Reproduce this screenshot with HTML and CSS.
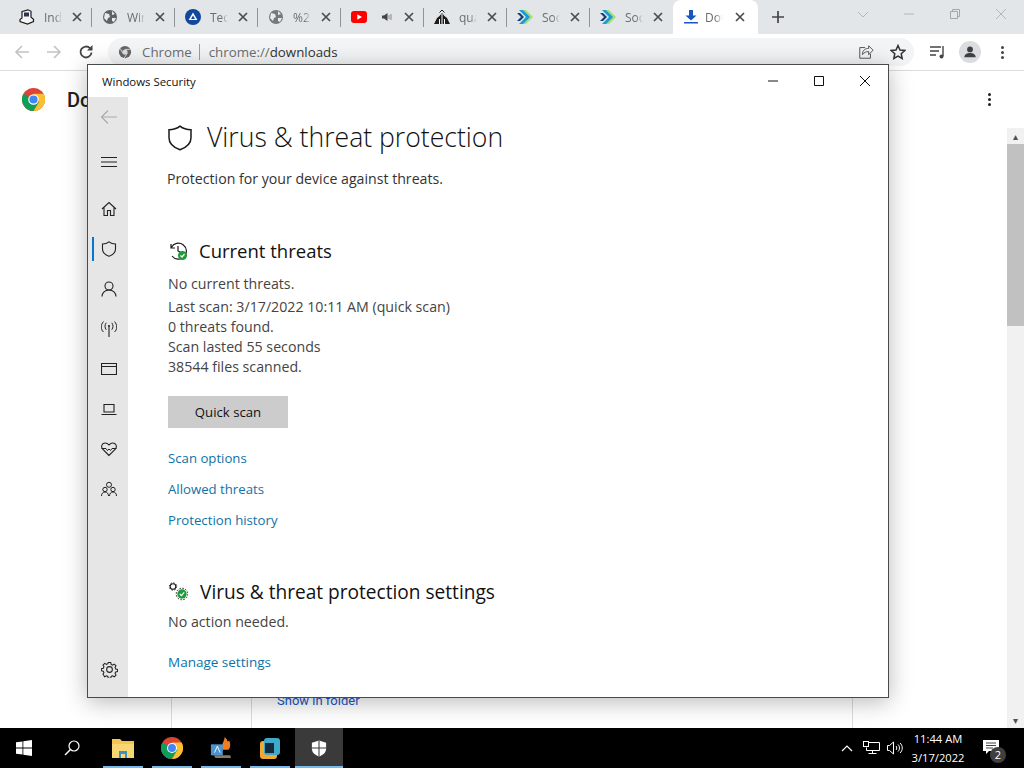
FILE: index.html
```html
<!DOCTYPE html>
<html lang="en">
<head>
<meta charset="utf-8">
<title>Windows Security</title>
<link rel="stylesheet" href="styles.css">
</head>
<body>
<svg class="defs" aria-hidden="true"><defs><g id="tabx"><path d="M1 1l8 8M9 1L1 9" stroke="#4a4d50" stroke-width="1.700"/></g></defs></svg>
<div class="screen">
  <header class="tabstrip">
    <div class="tab"><svg class="favicon" viewBox="0 0 16 16"><path d="M3 2.500L9 .8l3 1.500v6l2.500 2v2.200L8.500 15 1 12.500v-2l2-1.500z" fill="#f4f4f4" stroke="#1c1c1c" stroke-width="1.200"/><rect x="5" y="3.500" width="5" height="4" fill="#2d3350"/></svg><span class="tab-title">Indi</span><svg class="tab-x" viewBox="0 0 10 10"><use href="#tabx"/></svg></div>
    <div class="tab"><svg class="favicon" viewBox="0 0 16 16"><circle cx="8" cy="8" r="7" fill="#5f6368"/><path d="M3 4l4 1 1 3-2 1-1 3-3-3zM10 2l3 3-3 1zM10 9h4l-2 4-2-1z" fill="#e8eaed"/></svg><span class="tab-title">Win</span><svg class="tab-x" viewBox="0 0 10 10"><use href="#tabx"/></svg></div>
    <div class="tab"><svg class="favicon" viewBox="0 0 16 16"><circle cx="8" cy="8" r="8" fill="#12479c"/><path d="M8 3.600L12.400 11H3.600z" fill="#fff"/><path d="M8 6.600L10 10H6z" fill="#12479c"/></svg><span class="tab-title">Tech</span><svg class="tab-x" viewBox="0 0 10 10"><use href="#tabx"/></svg></div>
    <div class="tab"><svg class="favicon" viewBox="0 0 16 16"><circle cx="8" cy="8" r="7" fill="#75787c"/><path d="M3 4l4 1 1 3-2 1-1 3-3-3zM10 2l3 3-3 1zM10 9h4l-2 4-2-1z" fill="#e8eaed"/></svg><span class="tab-title">%2.</span><svg class="tab-x" viewBox="0 0 10 10"><use href="#tabx"/></svg></div>
    <div class="tab"><svg class="favicon yt" viewBox="0 0 16 12"><rect width="16" height="12" rx="3" fill="#f00"/><path d="M6.300 3.200L11 6l-4.700 2.800z" fill="#fff"/></svg><svg class="audio" viewBox="0 0 12 12"><path d="M1 4.500h2L6.500 2v8L3 7.500H1z" fill="#444"/><path d="M8 4v4M10 3v6" stroke="#888"/></svg><svg class="tab-x" viewBox="0 0 10 10"><use href="#tabx"/></svg></div>
    <div class="tab"><svg class="favicon" viewBox="0 0 16 16"><path d="M0 15l3-6 2.500-2L8 4l2.500 3L13 9l3 6z" fill="#1c1c1c"/><path d="M8 5v10M5.500 10v5M10.500 10v5" stroke="#fff"/><path d="M5.500 3.500L8 1l2.500 2.500" stroke="#1c1c1c" fill="none"/></svg><span class="tab-title">qua</span><svg class="tab-x" viewBox="0 0 10 10"><use href="#tabx"/></svg></div>
    <div class="tab"><svg class="favicon" viewBox="0 0 16 16"><path d="M5 1l7 7-7 7h4l7-7-7-7z" fill="#a6dc7c"/><path d="M2 1l7 7-7 7h4l7-7-7-7z" fill="#1b9bd6"/><path d="M0 4l4 4-4 4h3l4-4-4-4z" fill="#123e78"/></svg><span class="tab-title">Soc</span><svg class="tab-x" viewBox="0 0 10 10"><use href="#tabx"/></svg></div>
    <div class="tab"><svg class="favicon" viewBox="0 0 16 16"><path d="M5 1l7 7-7 7h4l7-7-7-7z" fill="#a6dc7c"/><path d="M2 1l7 7-7 7h4l7-7-7-7z" fill="#1b9bd6"/><path d="M0 4l4 4-4 4h3l4-4-4-4z" fill="#123e78"/></svg><span class="tab-title">Soc</span><svg class="tab-x" viewBox="0 0 10 10"><use href="#tabx"/></svg></div>
    <div class="tab tab-active"><svg class="favicon dl" viewBox="0 0 14 14"><path d="M5 0h4v5.500h3.500L7 10.500 1.500 5.500H5z" fill="#1a55c4"/><rect x="0" y="12" width="14" height="1.500" fill="#1a55c4"/></svg><span class="tab-title">Dow</span><svg class="tab-x" viewBox="0 0 10 10"><use href="#tabx"/></svg></div>
    <svg class="newtab" viewBox="0 0 12 12"><path d="M6 0v12M0 6h12" stroke="#444" stroke-width="1.700"/></svg>
    <div class="win-controls">
      <svg viewBox="0 0 12 12"><path d="M1 4l5 5 5-5" fill="none" stroke="#b4b7ba"/></svg>
      <svg viewBox="0 0 12 12"><path d="M1 6h10" stroke="#b4b7ba"/></svg>
      <svg viewBox="0 0 12 12"><path d="M1.500 3.500h7v7h-7zM3.500 3.500v-2h7v7h-2" fill="none" stroke="#a4a7aa"/></svg>
      <svg viewBox="0 0 12 12"><path d="M1 1l10 10M11 1L1 11" stroke="#b4b7ba"/></svg>
    </div>
  </header>

  <nav class="toolbar">
    <svg class="nav-icon" viewBox="0 0 16 16"><path d="M15 8H2M8 2L2 8l6 6" fill="none" stroke="#c0c3c6" stroke-width="1.600"/></svg>
    <svg class="nav-icon" viewBox="0 0 16 16"><path d="M1 8h13M8 2l6 6-6 6" fill="none" stroke="#c0c3c6" stroke-width="1.600"/></svg>
    <svg class="nav-icon" viewBox="0 0 16 16"><path d="M13.500 8.500A5.500 5.500 0 1 1 12 4.200" fill="none" stroke="#444" stroke-width="1.800"/><path d="M14.500 1v5.500H9z" fill="#444"/></svg>
    <div class="omnibox">
      <svg class="omni-icon" viewBox="0 0 16 16"><circle cx="8" cy="8" r="7" fill="#666"/><circle cx="8" cy="8" r="3" fill="#ddd"/><path d="M8 5h6M5.500 9.500L2.500 4M10.500 9.500L7 15" stroke="#ddd"/></svg>
      <span class="omni-origin">Chrome</span>
      <span class="omni-url">chrome://<b>downloads</b></span>
      <svg class="omni-action" viewBox="0 0 18 18"><path d="M8 4H2v12h12v-5M5 12c0-5 3-7 7-7V2l5 5-5 5V8.500c-3 0-5 1-7 3.500z" fill="none" stroke="#555" stroke-width="1.100"/></svg>
      <svg class="omni-action" viewBox="0 0 16 16"><path d="M8 1.500l2 4.500 4.800.5-3.600 3.200 1 4.800L8 12.100l-4.200 2.400 1-4.800L1.200 6.500 6 6z" fill="none" stroke="#333" stroke-width="1.500"/></svg>
    </div>
    <svg class="tool-icon" viewBox="0 0 16 16"><path d="M0 3h11M0 7h9M0 11h6" stroke="#444" stroke-width="1.400"/><path d="M13 2v10" stroke="#444" stroke-width="1.400"/><circle cx="11.500" cy="12.500" r="2" fill="#444"/></svg>
    <div class="avatar"><svg viewBox="0 0 16 16"><circle cx="8" cy="5" r="3.300" fill="#3c4043"/><path d="M1.500 14c0-3.500 3-5 6.500-5s6.500 1.500 6.500 5z" fill="#3c4043"/></svg></div>
    <div class="dots"><i></i><i></i><i></i></div>
  </nav>

  <main class="page">
    <header class="page-head">
      <svg class="chrome-logo" viewBox="0 0 24 24"><circle cx="12" cy="12" r="12" fill="#db4437"/><path d="M12 12L1.600 6A12 12 0 0 0 12 24l6-10z" fill="#0f9d58"/><path d="M12 6h10.400A12 12 0 0 1 12 24l6-10z" fill="#fbc02d"/><circle cx="12" cy="12" r="5.500" fill="#fff"/><circle cx="12" cy="12" r="4.300" fill="#4285f4"/></svg>
      <h1>Downloads</h1>
      <div class="dots page-dots"><i></i><i></i><i></i></div>
    </header>
    <div class="page-body">
      <div class="card">
        <div class="card-left"></div>
        <div class="card-right"><a class="folder-link">Show in folder</a></div>
      </div>
      <div class="scrollbar">
        <span class="arrow">▴</span>
        <div class="track"><div class="thumb"></div></div>
        <span class="arrow">▾</span>
      </div>
    </div>
  </main>

  <footer class="taskbar">
    <div class="task"><svg class="ic16" viewBox="0 0 16 16"><path d="M0 2.300l6.500-.9v6.100H0zM7.300 1.300L16 0v7.500H7.300zM0 8.400h6.500v6.200L0 13.700zM7.300 8.400H16V16l-8.700-1.200z" fill="#fff"/></svg></div>
    <div class="task"><svg class="ic16" viewBox="0 0 16 16"><circle cx="10" cy="6" r="5" fill="none" stroke="#fff" stroke-width="1.200"/><path d="M6.500 9.500L1 15" stroke="#fff" stroke-width="1.500"/></svg></div>
    <div class="task running first-running"><svg class="ic22" viewBox="0 0 22 20"><path d="M0 1h8l2 2h12v17H0z" fill="#f3c654"/><path d="M0 6h22v14H0z" fill="#f7d774"/><path d="M7 13h8v7H7z" fill="#3d8fc4"/><path d="M9 16h4v4H9z" fill="#f7d774"/></svg></div>
    <div class="task running"><svg class="ic22 round" viewBox="0 0 24 24"><circle cx="12" cy="12" r="12" fill="#db4437"/><path d="M12 12L1.600 6A12 12 0 0 0 12 24l6-10z" fill="#0f9d58"/><path d="M12 6h10.400A12 12 0 0 1 12 24l6-10z" fill="#fbc02d"/><circle cx="12" cy="12" r="5.500" fill="#fff"/><circle cx="12" cy="12" r="4.300" fill="#4285f4"/></svg></div>
    <div class="task running"><svg class="ic22" viewBox="0 0 24 24"><path d="M14 14C11 9 16 5 16 0c2 2 3 3 3 5l2-1c2 4 1 8-1 10z" fill="#ef7d22"/><rect x="1" y="8" width="13" height="12" fill="#4d93cf"/><path d="M5 17l3-7 3 7" stroke="#fff" fill="none"/><path d="M4 20h18l1 3H6z" fill="#8a7a5f"/></svg></div>
    <div class="task running"><svg class="ic22" viewBox="0 0 22 22"><rect x="1" y="4" width="17" height="18" rx="3" fill="#eeaa30"/><rect x="5" y="1" width="16" height="17" rx="3" fill="#3fa9c9"/><rect x="6" y="6" width="9" height="10" fill="#15293d"/></svg></div>
    <div class="task active"><svg class="ic18" viewBox="0 0 18 18"><path d="M9 0l8 2.500V9c0 5-4 7.500-8 9-4-1.500-8-4-8-9V2.500z" fill="#fff"/><path d="M9 0v18M1 8.500h16" stroke="#3a3a3a" stroke-width="1.200"/></svg></div>
    <div class="tray">
      <svg class="tray-chev" viewBox="0 0 12 8"><path d="M1 7l5-5 5 5" fill="none" stroke="#fff" stroke-width="1.200"/></svg>
      <svg class="tray-net" viewBox="0 0 17 14"><path d="M4.500 1.500h12v8h-13v-3M9.500 9.500v3M5.500 12.500h8" fill="none" stroke="#fff"/><rect x=".5" y=".5" width="5" height="5" fill="#000" stroke="#fff"/></svg>
      <svg class="tray-vol" viewBox="0 0 17 14"><path d="M.5 4.500h2L6.500 1v12l-4-3.500h-2z" fill="none" stroke="#fff"/><path d="M9 5c1 1 1 3 0 4M11 3.500c2 2 2 5 0 7M13 2c3 2.500 3 7.500 0 10" fill="none" stroke="#fff"/></svg>
      <div class="clock"><span>11:44 AM</span><span>3/17/2022</span></div>
      <div class="notify"><svg viewBox="0 0 16 14"><path d="M0 0h16v11H6l-3 3v-3H0z" fill="#fff"/><path d="M3 3h10M3 5.500h10M3 8h7" stroke="#444"/></svg><span class="notify-badge">2</span></div>
    </div>
  </footer>

  <section class="security">
    <div class="sec-title">
      <span class="sec-name">Windows Security</span>
      <div class="sec-controls">
        <svg viewBox="0 0 12 12"><path d="M1 6h10" stroke="#111"/></svg>
        <svg viewBox="0 0 12 12"><path d="M1.500 1.500h9v9h-9z" fill="none" stroke="#111"/></svg>
        <svg viewBox="0 0 12 12"><path d="M1 1l10 10M11 1L1 11" stroke="#111"/></svg>
      </div>
    </div>
    <div class="sec-body">
      <aside class="rail">
        <svg class="rail-back" viewBox="0 0 18 16"><path d="M17 8H1.500M8 1.500L1.500 8 8 14.500" fill="none" stroke="#a9a9a9" stroke-width="1.100"/></svg>
        <svg class="rail-menu" viewBox="0 0 16 12"><path d="M0 1.500h16M0 6h16M0 10.500h16" stroke="#222" stroke-width="1.100"/></svg>
        <svg class="rail-item" viewBox="0 0 16 16"><path d="M1 8l7-6.500L15 8M3 6.500V14.500h3.500V9.500h3v5H13V6.500" fill="none" stroke="#222" stroke-width="1.100"/></svg>
        <div class="rail-current"><svg class="rail-item" viewBox="0 0 16 16"><path d="M8 .8c1.800 1.500 4 2.200 6.500 2.200V8c0 3.500-3 6-6.500 7.300C4.500 14 1.500 11.500 1.500 8V3C4 3 6.200 2.300 8 .8z" fill="none" stroke="#222" stroke-width="1.100"/></svg></div>
        <svg class="rail-item" viewBox="0 0 16 16"><circle cx="8" cy="5" r="4" fill="none" stroke="#222" stroke-width="1.100"/><path d="M1 15.500c0-3.800 3-6.500 7-6.500s7 2.700 7 6.500" fill="none" stroke="#222" stroke-width="1.100"/></svg>
        <svg class="rail-item" viewBox="0 0 16 16"><path d="M8 6v10" stroke="#222" stroke-width="1.100"/><circle cx="8" cy="5" r="1.100" fill="#222"/><path d="M5.200 1.800c-1.600 2.200-1.600 4.700 0 6.900M10.800 1.800c1.600 2.200 1.600 4.700 0 6.900M2.500.5c-3 3.300-3 8 0 10.500M13.500.5c3 3.300 3 8 0 10.500" fill="none" stroke="#222"/></svg>
        <svg class="rail-item" viewBox="0 0 16 16"><path d="M.5 2.500h15v11H.5zM.5 5.500h15" fill="none" stroke="#222" stroke-width="1.100"/></svg>
        <svg class="rail-item" viewBox="0 0 16 16"><path d="M3 3.500h10v7.500H3zM.5 13.500h15" fill="none" stroke="#222" stroke-width="1.100"/></svg>
        <svg class="rail-item" viewBox="0 0 16 16"><path d="M8 14.500L1.700 8.200C-.5 5.500 1 2 4.200 2 6 2 7.200 3 8 4c.8-1 2-2 3.800-2C15 2 16.500 5.500 14.300 8.200z" fill="none" stroke="#222" stroke-width="1.100"/><path d="M.5 7.500H5l1.500 2L8 8l1.500 1.500L11 7.500h4.500" fill="none" stroke="#222"/></svg>
        <svg class="rail-item" viewBox="0 0 16 16"><circle cx="8" cy="3.800" r="2.500" fill="none" stroke="#222"/><circle cx="4" cy="8.500" r="2.200" fill="none" stroke="#222"/><circle cx="12" cy="8.500" r="2.200" fill="none" stroke="#222"/><path d="M.5 15c0-2.500 1.500-4 3.500-4s3.500 1.500 3.500 4M8.500 15c0-2.500 1.500-4 3.500-4s3.500 1.500 3.500 4" fill="none" stroke="#222"/></svg>
        <svg class="rail-gear" viewBox="0 0 16 16"><circle cx="8" cy="8" r="2.700" fill="none" stroke="#222"/><path d="M6.700.7h2.600l.4 2 1.500.7 1.800-1 1.800 1.800-1 1.800.7 1.500 2 .4v2.200l-2 .4-.7 1.500 1 1.800-1.800 1.800-1.800-1-1.500.7-.4 2H6.700l-.4-2-1.500-.7-1.800 1L1.200 13l1-1.800-.7-1.500-2-.4V7.100l2-.4.7-1.500-1-1.800L3 1.600l1.800 1 1.500-.7z" transform="translate(.8 .8) scale(.9)" fill="none" stroke="#222" stroke-width="1.100"/></svg>
      </aside>
      <div class="content">
        <div class="title-row">
          <svg class="title-shield" viewBox="0 0 26 26"><path d="M13 1.200c3 2.400 6.800 3.600 11 3.600v8c0 5.500-4.500 9.700-11 12C6.500 22.500 2 18.300 2 12.800v-8c4.200 0 8-1.200 11-3.600z" fill="none" stroke="#1a1a1a" stroke-width="1.500"/></svg>
          <h2 class="title">Virus &amp; threat protection</h2>
        </div>
        <p class="subtitle">Protection for your device against threats.</p>

        <div class="section-head">
          <svg class="sec-icon" viewBox="0 0 20 20"><path d="M3 3v4h4M3.300 6.500A8 8 0 1 1 4 15" fill="none" stroke="#1a1a1a" stroke-width="1.200"/><path d="M10 5v5l3 1.500" fill="none" stroke="#1a1a1a" stroke-width="1.200"/><circle cx="14.500" cy="14.500" r="4.500" fill="#1e9b3b"/><path d="M12.500 14.500l1.500 1.500 2.500-3" fill="none" stroke="#fff" stroke-width="1.200"/></svg>
          <h3>Current threats</h3>
        </div>
        <p class="status first">No current threats.</p>
        <p class="status">Last scan: 3/17/2022 10:11 AM (quick scan)</p>
        <p class="status">0 threats found.</p>
        <p class="status">Scan lasted 55 seconds</p>
        <p class="status">38544 files scanned.</p>
        <button class="scan-btn">Quick scan</button>
        <a class="link">Scan options</a>
        <a class="link">Allowed threats</a>
        <a class="link">Protection history</a>

        <div class="section-head settings-head">
          <svg class="sec-icon" viewBox="0 0 20 20"><circle cx="5" cy="4.500" r="2.800" fill="none" stroke="#1a1a1a" stroke-width="1.100"/><circle cx="5" cy="4.500" r="3.700" fill="none" stroke="#1a1a1a" stroke-width="1" stroke-dasharray="1.300 1.600"/><circle cx="14" cy="12" r="5.800" fill="none" stroke="#1a1a1a" stroke-width="1" stroke-dasharray="1.500 1.500"/><circle cx="14" cy="12" r="4.700" fill="#1e9b3b"/><path d="M11.800 12l1.600 1.700 2.800-3.300" fill="none" stroke="#fff" stroke-width="1.200"/></svg>
          <h3>Virus &amp; threat protection settings</h3>
        </div>
        <p class="status after-head">No action needed.</p>
        <a class="link manage">Manage settings</a>
      </div>
    </div>
  </section>
</div>
</body>
</html>
```
FILE: styles.css
```css
* { box-sizing: border-box; }
html, body { margin: 0; padding: 0; height: 100%; overflow: hidden; }
body { font-family: "Open Sans", "Noto Sans", "Liberation Sans", sans-serif; background: #fff; }
h1, h2, h3, p { margin: 0; font-weight: 400; }
svg { display: block; flex: none; }
.defs { width: 0; height: 0; position: absolute; }

.screen { position: relative; width: 1024px; height: 768px; display: flex; flex-direction: column; overflow: hidden; }

/* Chrome tab strip */
.tabstrip { height: 34px; flex: none; display: flex; align-items: center; background: #e3e6e9; padding-left: 9px; }
.tab { width: 83px; height: 34px; flex: none; display: flex; align-items: center; padding-left: 10px; position: relative; }
.tab::after { content: ""; position: absolute; right: 0; top: 8px; width: 1px; height: 19px; background: #8f9296; }
.tab .favicon { width: 16px; height: 16px; }
.tab .favicon.yt { height: 12px; }
.tab .favicon.dl { width: 14px; height: 14px; margin-left: 1px; margin-right: 1px; }
.tab .audio { width: 12px; height: 12px; margin-left: 14px; }
.tab-title { width: 18px; margin-left: 9px; font-size: 12px; color: #6a6d70; overflow: hidden; white-space: nowrap; -webkit-mask-image: linear-gradient(to right, #000 60%, transparent); mask-image: linear-gradient(to right, #000 60%, transparent); }
.tab-x { width: 10px; height: 10px; margin-left: auto; margin-right: 10px; }
.tab:nth-child(8)::after { display: none; }
.tab-active { background: #fff; border-radius: 8px 8px 0 0; width: 85px; }
.tab-active::after { display: none; }
.tab-active .tab-title { margin-left: 6px; }
.tab-active .tab-x { margin-right: 13px; }
.newtab { width: 12px; height: 12px; margin-left: 14px; }
.win-controls { margin-left: auto; display: flex; gap: 34px; padding-right: 17px; align-items: center; position: relative; top: -3px; }
.win-controls svg { width: 12px; height: 12px; }

/* Chrome toolbar */
.toolbar { height: 37px; flex: none; display: flex; align-items: center; background: #fff; border-bottom: 1px solid #dadce0; padding-left: 14px; }
.nav-icon { width: 16px; height: 16px; margin-right: 16px; }
.omnibox { height: 28px; margin-left: -2px; background: #f3f4f5; border-radius: 14px; display: flex; align-items: center; padding-left: 10px; padding-right: 8px; width: 806px; }
.omni-icon { width: 14px; height: 14px; }
.omni-origin { margin-left: 10px; font-size: 13.300px; color: #6a6d70; padding-right: 7px; border-right: 1px solid #9a9da0; line-height: 16px; }
.omni-url { margin-left: 9px; font-size: 13.300px; color: #6a6d70; }
.omni-url b { font-weight: 400; color: #333; }
.omni-action { width: 16px; height: 16px; }
.omni-action:nth-last-child(2) { margin-left: auto; margin-right: 16px; }
.tool-icon { width: 16px; height: 16px; margin-left: 16px; }
.avatar { width: 22px; height: 22px; margin-left: 13px; border-radius: 50%; background: #dadce0; padding: 4px; }
.dots { display: flex; flex-direction: column; gap: 2px; width: 3px; }
.dots i { width: 3px; height: 3px; border-radius: 50%; background: #444; }
.toolbar .dots { margin-left: 20px; }

/* Downloads page behind the window */
.page { flex: 1; min-height: 0; display: flex; flex-direction: column; background: #fff; }
.page-head { height: 57px; flex: none; display: flex; align-items: center; padding-left: 22px; }
.chrome-logo { width: 23px; height: 23px; }
.page-head h1 { margin-left: 22px; font-size: 20px; font-weight: 500; color: #202124; font-family: Roboto, "Open Sans", sans-serif; }
.page-dots { margin-left: auto; margin-right: 33px; }
.page-dots i { background: #202124; }
.page-body { flex: 1; min-height: 0; display: flex; }
.card { flex: 1; margin-left: 171px; margin-right: 154px; display: flex; border-left: 1px solid #dadce0; border-right: 1px solid #dadce0; min-height: 0; }
.card-left { width: 80px; border-right: 1px solid #dadce0; }
.card-right { flex: 1; display: flex; flex-direction: column; justify-content: flex-end; padding-left: 25px; padding-bottom: 19px; }
.folder-link { font-size: 13px; line-height: 16px; color: #1a55c4; font-family: Roboto, sans-serif; }
.scrollbar { width: 17px; flex: none; background: #f1f1f1; display: flex; flex-direction: column; align-items: center; }
.arrow { height: 16px; font-size: 10px; line-height: 16px; color: #505050; }
.track { flex: 1; width: 100%; }
.thumb { height: 182px; background: #c1c1c1; }

/* Taskbar */
.taskbar { height: 40px; flex: none; display: flex; background: #000; }
.task { width: 48px; height: 40px; flex: none; display: flex; align-items: center; justify-content: center; position: relative; }
.task.running { width: 49px; }
.task.first-running { margin-left: 2px; }
.task.running::after { content: ""; position: absolute; left: 5px; right: 4px; bottom: 0; height: 2px; background: #76b9ed; }
.task.active { background: #3a3a3a; margin-left: 1px; }
.task.active::after { content: ""; position: absolute; left: 0; right: 0; bottom: 0; height: 2px; background: #76b9ed; }
.ic16 { width: 16px; height: 16px; }
.ic22 { width: 22px; height: 22px; }
.ic18 { width: 16px; height: 17px; }
.tray { margin-left: auto; display: flex; align-items: center; color: #fff; }
.tray-chev { width: 12px; height: 8px; margin-right: 10px; }
.tray-net { width: 17px; height: 14px; margin-right: 7px; }
.tray-vol { width: 17px; height: 14px; margin-right: 4px; }
.clock { width: 60px; display: flex; flex-direction: column; align-items: center; font-size: 11.200px; line-height: 19px; color: #fff; }
.notify { width: 56px; height: 40px; position: relative; padding-left: 15px; padding-top: 12px; }
.notify svg { width: 16px; height: 14px; }
.notify-badge { position: absolute; left: 22px; top: 19px; width: 16px; height: 16px; border-radius: 50%; background: #3f3f3f; color: #fff; font-size: 11px; line-height: 16px; text-align: center; }

/* Windows Security floating window */
.security { position: absolute; left: 87px; top: 64px; width: 802px; height: 634px; background: #fff; border: 1px solid #4a4a4a; box-shadow: 0 4px 22px rgba(0,0,0,.28); display: flex; flex-direction: column; }
.sec-title { height: 32px; flex: none; display: flex; align-items: center; padding-left: 14px; }
.sec-name { font-size: 11.400px; color: #111; }
.sec-controls { margin-left: auto; display: flex; gap: 34px; padding-right: 17px; }
.sec-controls svg { width: 12px; height: 12px; }
.sec-body { flex: 1; min-height: 0; display: flex; }
.rail { width: 40px; flex: none; background: #e6e6e6; display: flex; flex-direction: column; align-items: center; padding-top: 12px; padding-left: 2px; }
.rail-back { width: 18px; height: 16px; }
.rail-menu { width: 16px; height: 12px; margin-top: 31px; margin-bottom: 33px; }
.rail-item { width: 16px; height: 16px; margin-bottom: 24px; }
.rail-current { position: relative; height: 16px; margin-bottom: 24px; }
.rail-current::before { content: ""; position: absolute; left: -9px; top: -4px; width: 2px; height: 24px; background: #0078d4; }
.rail-gear { width: 17px; height: 17px; margin-top: auto; margin-bottom: 19px; }
.content { flex: 1; min-width: 0; padding: 25px 0 0 39px; }
.title-row { display: flex; align-items: center; height: 32px; }
.title-shield { width: 26px; height: 26px; }
.title { margin-left: 14px; padding-bottom: 2px; font-size: 26.600px; line-height: 32px; font-weight: 300; color: #111; white-space: nowrap; }
.subtitle { margin-top: 15px; font-size: 14.150px; line-height: 20px; color: #333; }
.section-head { display: flex; align-items: center; height: 28px; margin-top: 48px; margin-left: 1px; }
.sec-icon { width: 20px; height: 20px; }
.section-head h3 { margin-left: 11px; font-size: 18.500px; line-height: 28px; color: #111; white-space: nowrap; }
.status { margin-left: 1px; font-size: 14.200px; line-height: 20px; color: #444; white-space: nowrap; }
.status.first { margin-top: 9px; margin-bottom: 3px; }
.scan-btn { display: block; margin: 19px 0 0 1px; width: 120px; height: 32px; border: 0; background: #ccc; font: inherit; font-size: 13.200px; color: #111; padding: 0; }
.link { display: block; margin: 11px 0 0 1px; font-size: 13.200px; line-height: 20px; color: #0e72a8; white-space: nowrap; }
.scan-btn + .link { margin-top: 20px; }
.settings-head { margin-top: 48px; }
.settings-head h3 { margin-left: 12px; font-size: 19.100px; }
.after-head { margin-top: 6px; }
.manage { margin-top: 20px; font-size: 13.500px; }
```
